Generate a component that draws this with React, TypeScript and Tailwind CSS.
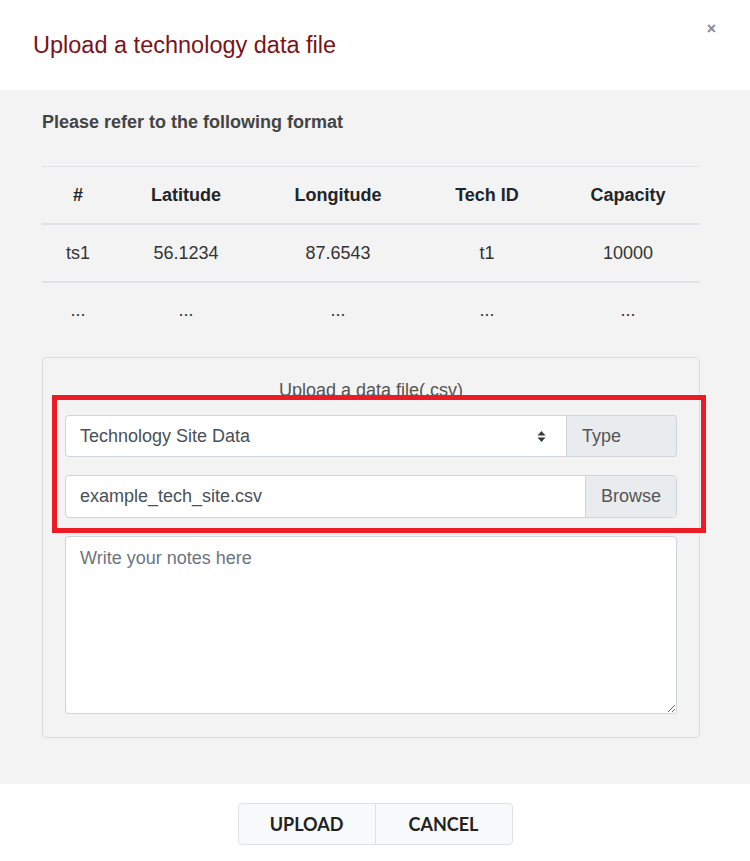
import React from "react";

const columns = ["#", "Latitude", "Longitude", "Tech ID", "Capacity"];
const sample = ["ts1", "56.1234", "87.6543", "t1", "10000"];
const dots = ["...", "...", "...", "...", "..."];

const sans = { fontFamily: '"Liberation Sans", Arial, sans-serif' };

function Row({ cells, bold, border }: { cells: string[]; bold?: boolean; border: string }) {
  return (
    <div className={`grid grid-cols-[72px_144px_160px_138px_144px] h-[58px] items-center ${border}`}>
      {cells.map((c, i) => (
        <div
          key={i}
          className={`text-center text-[18px] ${bold ? "font-bold text-[#212529]" : "text-[#333]"}`}
        >
          {c}
        </div>
      ))}
    </div>
  );
}

export default function App() {
  return (
    <div className="relative w-[750px] h-[861px] overflow-hidden bg-white" style={sans}>
      {/* Header */}
      <div className="h-[90px] flex items-center justify-between pl-[33px] pr-[34px]">
        <h2 className="text-[23.5px] text-[#7a1418] pt-[1px]">Upload a technology data file</h2>
        <button className="self-start mt-[21px] text-[16px] font-bold text-[#888] leading-none">×</button>
      </div>

      {/* Body */}
      <div className="bg-[#f3f3f3] pl-[42px] pr-[50px] pt-[20px] pb-[46px]">
        <p className="text-[18px] font-bold text-[#444] leading-6">Please refer to the following format</p>

        <div className="mt-[32px]">
          <div className="border-t border-[#e1e3e8]">
            <Row cells={columns} bold border="border-b-2 border-[#dee2e6]" />
          </div>
          <Row cells={sample} border="border-b-2 border-[#dee2e6]" />
          <Row cells={dots} border="pb-[3px]" />
        </div>

        <div className="mt-[16px] border border-[#dcdcdc] rounded-[4px] px-[22px] pt-[20px] pb-[23px]">
          <p className="text-center text-[18px] text-[#555] leading-6">Upload a data file(.csv)</p>

          <div className="mt-[13px] flex h-[42px]">
            <div className="flex-1 flex items-center justify-between bg-white border border-[#ced4da] rounded-l-[4px] pl-[14px] pr-[20px]">
              <span className="text-[18px] text-[#495057]">Technology Site Data</span>
              <svg width="9" height="13" viewBox="0 0 9 13">
                <path d="M4.5 1 L8.5 5.5 H0.5 Z" fill="#343a40" />
                <path d="M4.5 12 L8.5 7.5 H0.5 Z" fill="#343a40" />
              </svg>
            </div>
            <div className="w-[110px] flex items-center bg-[#e9ecef] border border-l-0 border-[#ced4da] rounded-r-[4px] pl-[15px] text-[18px] text-[#555]">
              Type
            </div>
          </div>

          <div className="mt-[18px] flex h-[43px] bg-white border border-[#ced4da] rounded-[4px] overflow-hidden">
            <div className="flex-1 flex items-center pl-[14px] text-[18px] text-[#495057]">example_tech_site.csv</div>
            <div className="w-[91px] flex items-center justify-center bg-[#e9ecef] border-l border-[#ced4da] text-[18px] text-[#555]">
              Browse
            </div>
          </div>

          <textarea
            placeholder="Write your notes here"
            className="mt-[18px] block w-full h-[178px] bg-white border border-[#ced4da] rounded-[4px] px-[14px] py-[8px] text-[18px] text-[#495057] placeholder:text-[#6c757d] outline-none"
            style={sans}
          />
        </div>
      </div>

      {/* Footer */}
      <div className="h-[77px] flex justify-center pt-[19px]">
        <div
          className="flex h-[42px] border border-[#dee2e6] rounded-[4px] bg-[#f8f9fa] overflow-hidden"
          style={{ fontFamily: 'Lato, "Liberation Sans", sans-serif' }}
        >
          <button className="w-[137px] text-[18px] font-bold text-[#222] border-r border-[#dee2e6]">UPLOAD</button>
          <button className="w-[136px] text-[18px] font-bold text-[#222]">CANCEL</button>
        </div>
      </div>

      {/* Highlight annotation */}
      <div className="absolute left-[52px] top-[395px] w-[654px] h-[138px] border-[5px] border-[#ed1c24] pointer-events-none" />
    </div>
  );
}
